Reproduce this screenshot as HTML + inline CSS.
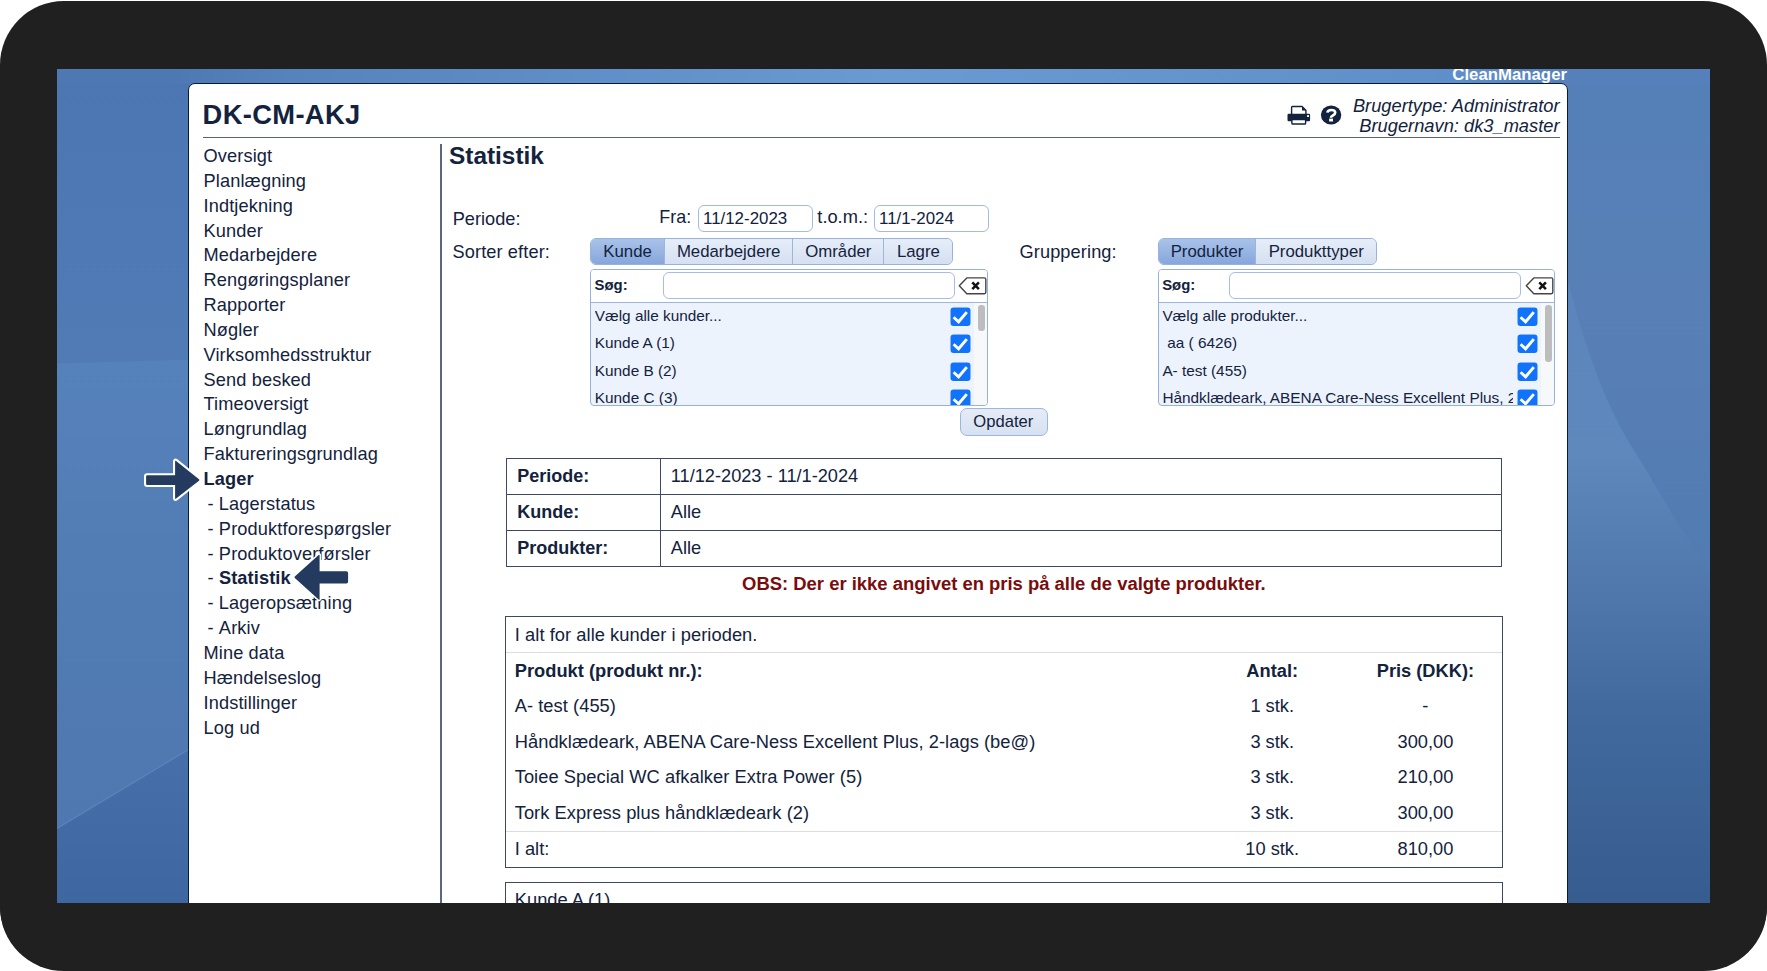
<!DOCTYPE html>
<html><head><meta charset="utf-8"><title>Statistik</title><style>
html,body{margin:0;padding:0;width:1767px;height:971px;overflow:hidden;background:#fff;}
body{position:relative;font-family:"Liberation Sans",sans-serif;color:#13223d;}
.t{position:absolute;line-height:1;white-space:nowrap;}
.r{position:absolute;}
.frame{position:absolute;left:0;top:1px;width:1767px;height:970px;border-radius:64px;background:#212021;}
.blue{position:absolute;left:57px;top:69px;width:1653px;height:834px;overflow:hidden;
 background:linear-gradient(180deg,#4e78b4 0%,#527fbb 35%,#4a74ae 70%,#3e65a0 100%);}
.streak1,.streak2{position:absolute;}
.panel{position:absolute;left:188px;top:83px;width:1378px;height:840px;background:#fff;border:1px solid #0a1a3a;border-radius:7px 7px 0 0;}
.frametop{position:absolute;left:0;top:903px;width:1767px;height:67px;background:#212021;border-radius:0 0 64px 64px;}
.inp{position:absolute;box-sizing:border-box;border:1.3px solid #a3bbe4;border-radius:6px;background:#fff;}
.tabs{position:absolute;display:flex;box-sizing:border-box;border:1.2px solid #97b2df;border-radius:6px;overflow:hidden;background:#dbe5f4;}
.tab{box-sizing:border-box;height:100%;font-size:16.8px;line-height:25px;padding-top:0px;text-align:center;border-left:1px solid #9fb4d8;color:#13223d;
 background:linear-gradient(#e6edf8,#d5e0f1);}
.tab:first-child{border-left:none;}
.tab.sel{background:linear-gradient(#a9c2e8,#86a7dc);}
.lb{position:absolute;box-sizing:border-box;border:1.3px solid #95b1df;border-radius:4px;background:#edf3fd;overflow:hidden;}
.lbhead{position:absolute;left:0;top:0;right:0;height:31.5px;background:#fff;border-bottom:1.3px solid #9db6e0;}
.track{position:absolute;top:32.8px;width:15px;bottom:0;background:#f7f8f9;}
.sinp{position:absolute;box-sizing:border-box;border:1.3px solid #a6bde6;border-radius:6px;background:#fff;}
.clr{position:absolute;line-height:0;}
.cb{position:absolute;line-height:0;}
.sb{position:absolute;width:6.7px;border-radius:3.3px;background:#bdbdbd;}
.btn{position:absolute;box-sizing:border-box;border:1.3px solid #9cb6e2;border-radius:7px;background:linear-gradient(#e6ecf6,#d6e1f1);}
</style></head>
<body>
<div class="frame"></div>
<svg class="r" style="left:57px;top:69px" width="1653" height="834" viewBox="57 69 1653 834">
<defs>
<linearGradient id="gl" x1="0" y1="69" x2="0" y2="903" gradientUnits="userSpaceOnUse">
 <stop offset="0" stop-color="#4c76b2"/><stop offset="0.35" stop-color="#507bb5"/><stop offset="1" stop-color="#3f67a1"/></linearGradient>
<linearGradient id="gl2" x1="0" y1="361" x2="0" y2="830" gradientUnits="userSpaceOnUse">
 <stop offset="0" stop-color="#5682bb"/><stop offset="0.4" stop-color="#527cb4"/><stop offset="1" stop-color="#4f78b1"/></linearGradient>
<linearGradient id="gl3" x1="0" y1="750" x2="0" y2="903" gradientUnits="userSpaceOnUse">
 <stop offset="0" stop-color="#4770ab"/><stop offset="1" stop-color="#3e66a0"/></linearGradient>
<linearGradient id="gr" x1="0" y1="69" x2="0" y2="903" gradientUnits="userSpaceOnUse">
 <stop offset="0" stop-color="#547fb7"/><stop offset="0.28" stop-color="#5880b7"/><stop offset="0.6" stop-color="#527bb2"/><stop offset="1" stop-color="#4a72a8"/></linearGradient>
<linearGradient id="gr2" x1="0" y1="250" x2="0" y2="903" gradientUnits="userSpaceOnUse">
 <stop offset="0" stop-color="#5a84bd"/><stop offset="0.31" stop-color="#5f88bd"/><stop offset="0.7" stop-color="#426a9e"/><stop offset="1" stop-color="#375c8f"/></linearGradient>
<linearGradient id="gt" x1="57" y1="0" x2="1710" y2="0" gradientUnits="userSpaceOnUse">
 <stop offset="0.07" stop-color="#4e78b4"/><stop offset="0.14" stop-color="#5682be"/><stop offset="0.5" stop-color="#6a9ad2"/><stop offset="0.85" stop-color="#5e8fca"/><stop offset="0.91" stop-color="#5580bb"/></linearGradient>
</defs>
<rect x="57" y="69" width="140" height="834" fill="url(#gl)"/>
<path d="M57 363.5L197 359.5V750.2L57 828.4z" fill="url(#gl2)"/>
<path d="M57 828.4L197 744.5V903H57z" fill="url(#gl3)"/>
<path d="M57 828.4L197 744.5" stroke="#6990c6" stroke-opacity="0.55" stroke-width="1.2"/>
<rect x="1560" y="69" width="150" height="834" fill="url(#gr)"/>
<path d="M1560 250C1580 330 1600 400 1640 460C1670 510 1690 545 1710 572V903H1560z" fill="url(#gr2)"/>
<rect x="57" y="69" width="1653" height="15" fill="url(#gt)"/>
</svg>
<div class="r" style="left:57px;top:69px;width:1653px;height:20px;overflow:hidden;"><div class="t" style="right:143px;top:-2.4px;font-size:16.8px;font-weight:bold;color:#fff;">CleanManager</div></div>
<div class="panel"></div>
<div class="t " style="left:202.60px;top:101px;font-size:27.3px;font-weight:bold;letter-spacing:0.37px;">DK-CM-AKJ</div>
<div class="r" style="left:203px;top:136.7px;width:1357px;height:1.2px;background:#566379;"></div>
<div class="t " style="right:207.50px;top:97px;font-size:18.3px;font-style:italic;">Brugertype: Administrator</div>
<div class="t " style="right:207.50px;top:117px;font-size:18.3px;font-style:italic;">Brugernavn: dk3_master</div>
<svg class="r" style="left:1285px;top:103px" width="28" height="24" viewBox="1285 103 28 24">
<path d="M1291.6 114.5V107.3Q1291.6 106.5 1292.4 106.5H1302L1305.9 110.3V114.5" fill="none" stroke="#13223d" stroke-width="1.4"/>
<path d="M1302 106.4V110.4H1306z" fill="#13223d"/>
<rect x="1287.5" y="113.8" width="22.6" height="7.4" rx="1.2" fill="#13223d"/>
<rect x="1307.1" y="115.1" width="1.9" height="1.9" fill="#fff"/>
<path d="M1291.9 119.6H1305.6V123.2Q1305.6 124 1304.8 124H1292.7Q1291.9 124 1291.9 123.2z" fill="#fff" stroke="#13223d" stroke-width="1.4"/>
</svg>
<svg class="r" style="left:1319px;top:103px" width="25" height="25" viewBox="1319 103 25 25">
<ellipse cx="1331.1" cy="115.0" rx="10.2" ry="9.5" fill="#13223d"/>
<path d="M1327.4 112.6C1327.7 110.8 1329.3 110.0 1331.3 110.0C1333.5 110.0 1335.2 111.1 1335.2 112.7C1335.2 114.2 1333.9 114.9 1332.8 115.5C1331.7 116.1 1330.9 116.5 1330.9 117.7" fill="none" stroke="#fff" stroke-width="2.6"/>
<rect x="1329.1" y="118.6" width="3.9" height="2.9" fill="#fff"/>
</svg>
<div class="t " style="left:203.50px;top:147px;font-size:18.2px;letter-spacing:0.13px;">Oversigt</div>
<div class="t " style="left:203.50px;top:172px;font-size:18.2px;letter-spacing:0.13px;">Planlægning</div>
<div class="t " style="left:203.50px;top:197px;font-size:18.2px;letter-spacing:0.13px;">Indtjekning</div>
<div class="t " style="left:203.50px;top:222px;font-size:18.2px;letter-spacing:0.13px;">Kunder</div>
<div class="t " style="left:203.50px;top:246px;font-size:18.2px;letter-spacing:0.13px;">Medarbejdere</div>
<div class="t " style="left:203.50px;top:271px;font-size:18.2px;letter-spacing:0.13px;">Rengøringsplaner</div>
<div class="t " style="left:203.50px;top:296px;font-size:18.2px;letter-spacing:0.13px;">Rapporter</div>
<div class="t " style="left:203.50px;top:321px;font-size:18.2px;letter-spacing:0.13px;">Nøgler</div>
<div class="t " style="left:203.50px;top:346px;font-size:18.2px;letter-spacing:0.13px;">Virksomhedsstruktur</div>
<div class="t " style="left:203.50px;top:371px;font-size:18.2px;letter-spacing:0.13px;">Send besked</div>
<div class="t " style="left:203.50px;top:395px;font-size:18.2px;letter-spacing:0.13px;">Timeoversigt</div>
<div class="t " style="left:203.50px;top:420px;font-size:18.2px;letter-spacing:0.13px;">Løngrundlag</div>
<div class="t " style="left:203.50px;top:445px;font-size:18.2px;letter-spacing:0.13px;">Faktureringsgrundlag</div>
<div class="t " style="left:203.50px;top:470px;font-size:18.2px;letter-spacing:0.13px;"><b>Lager</b></div>
<div class="t " style="left:207.50px;top:495px;font-size:18.2px;letter-spacing:0.13px;">-&nbsp;Lagerstatus</div>
<div class="t " style="left:207.50px;top:520px;font-size:18.2px;letter-spacing:0.13px;">-&nbsp;Produktforespørgsler</div>
<div class="t " style="left:207.50px;top:545px;font-size:18.2px;letter-spacing:0.13px;">-&nbsp;Produktoverførsler</div>
<div class="t " style="left:207.50px;top:569px;font-size:18.2px;letter-spacing:0.13px;">-&nbsp;<b>Statistik</b></div>
<div class="t " style="left:207.50px;top:594px;font-size:18.2px;letter-spacing:0.13px;">-&nbsp;Lageropsætning</div>
<div class="t " style="left:207.50px;top:619px;font-size:18.2px;letter-spacing:0.13px;">-&nbsp;Arkiv</div>
<div class="t " style="left:203.50px;top:644px;font-size:18.2px;letter-spacing:0.13px;">Mine data</div>
<div class="t " style="left:203.50px;top:669px;font-size:18.2px;letter-spacing:0.13px;">Hændelseslog</div>
<div class="t " style="left:203.50px;top:694px;font-size:18.2px;letter-spacing:0.13px;">Indstillinger</div>
<div class="t " style="left:203.50px;top:719px;font-size:18.2px;letter-spacing:0.13px;">Log ud</div>
<div class="r" style="left:440px;top:144px;width:1.6px;height:760px;background:#5a677c;"></div>
<div class="t " style="left:449.00px;top:144px;font-size:24.4px;font-weight:bold;">Statistik</div>
<div class="t " style="left:452.70px;top:210px;font-size:18.2px;">Periode:</div>
<div class="t " style="left:659.30px;top:209px;font-size:17.9px;">Fra:</div>
<div class="inp" style="left:697.6px;top:205px;width:115px;height:27.4px;"></div>
<div class="t " style="left:703.00px;top:211px;font-size:16.9px;">11/12-2023</div>
<div class="t " style="left:817.30px;top:208px;font-size:18.3px;">t.o.m.:</div>
<div class="inp" style="left:873.7px;top:205px;width:115px;height:27.4px;"></div>
<div class="t " style="left:879.00px;top:211px;font-size:16.9px;">11/1-2024</div>
<div class="t " style="left:452.50px;top:243px;font-size:18.2px;letter-spacing:0.11px;">Sorter efter:</div>
<div class="tabs" style="left:590.2px;top:238.2px;height:27px;"><div class="tab sel" style="width:72.8px">Kunde</div><div class="tab" style="width:128.4px">Medarbejdere</div><div class="tab" style="width:90.9px">Områder</div><div class="tab" style="width:69.2px">Lagre</div></div>
<div class="t " style="left:1019.50px;top:243px;font-size:18.2px;letter-spacing:0.11px;">Gruppering:</div>
<div class="tabs" style="left:1157.8px;top:238.2px;height:27px;"><div class="tab sel" style="width:96.5px">Produkter</div><div class="tab" style="width:120.9px">Produkttyper</div></div>
<div class="lb" style="left:590px;top:269px;width:398.3px;height:137px;"><div class="lbhead"></div><div class="track" style="left:383.3px;"></div></div>
<div class="t " style="left:594.60px;top:278px;font-size:14.9px;font-weight:bold;">Søg:</div>
<div class="sinp" style="left:662.50px;top:272.3px;width:292.5px;height:27px;"></div>
<div class="clr" style="left:957.60px;top:276px;"><svg width="30" height="20" viewBox="0 0 30 20"><path d="M8.8 1.9h17.6a1.4 1.4 0 0 1 1.4 1.4v13a1.4 1.4 0 0 1-1.4 1.4H8.8L1.3 9.8z" fill="#fff" stroke="#454545" stroke-width="1.4" stroke-linejoin="round"/><path d="M14.3 6.3l6.6 6.8M20.9 6.3l-6.6 6.8" stroke="#111" stroke-width="2.5"/></svg></div>
<div class="t " style="left:594.80px;top:308px;font-size:15.35px;width:349px;height:20px;overflow:hidden;">Vælg alle kunder...</div>
<div class="cb" style="left:950.10px;top:306.60px;height:20.00px;overflow:hidden;"><svg width="21" height="20" viewBox="0 0 21 20"><rect x="0.5" y="0.5" width="20" height="18.6" rx="3" fill="#fff"/><rect x="0.5" y="0.5" width="20" height="18.6" rx="3" fill="#1172fb"/><path d="M3.6 10.2l5 4.6 8.2-9.7" fill="none" stroke="#fff" stroke-width="2.9" stroke-linejoin="miter"/></svg></div>
<div class="t " style="left:594.80px;top:335px;font-size:15.35px;width:349px;height:20px;overflow:hidden;">Kunde A (1)</div>
<div class="cb" style="left:950.10px;top:334.05px;height:20.00px;overflow:hidden;"><svg width="21" height="20" viewBox="0 0 21 20"><rect x="0.5" y="0.5" width="20" height="18.6" rx="3" fill="#fff"/><rect x="0.5" y="0.5" width="20" height="18.6" rx="3" fill="#1172fb"/><path d="M3.6 10.2l5 4.6 8.2-9.7" fill="none" stroke="#fff" stroke-width="2.9" stroke-linejoin="miter"/></svg></div>
<div class="t " style="left:594.80px;top:363px;font-size:15.35px;width:349px;height:20px;overflow:hidden;">Kunde B (2)</div>
<div class="cb" style="left:950.10px;top:361.50px;height:20.00px;overflow:hidden;"><svg width="21" height="20" viewBox="0 0 21 20"><rect x="0.5" y="0.5" width="20" height="18.6" rx="3" fill="#fff"/><rect x="0.5" y="0.5" width="20" height="18.6" rx="3" fill="#1172fb"/><path d="M3.6 10.2l5 4.6 8.2-9.7" fill="none" stroke="#fff" stroke-width="2.9" stroke-linejoin="miter"/></svg></div>
<div class="t " style="left:594.80px;top:390px;font-size:15.35px;width:349px;height:15px;overflow:hidden;">Kunde C (3)</div>
<div class="cb" style="left:950.10px;top:388.95px;height:16.25px;overflow:hidden;"><svg width="21" height="20" viewBox="0 0 21 20"><rect x="0.5" y="0.5" width="20" height="18.6" rx="3" fill="#fff"/><rect x="0.5" y="0.5" width="20" height="18.6" rx="3" fill="#1172fb"/><path d="M3.6 10.2l5 4.6 8.2-9.7" fill="none" stroke="#fff" stroke-width="2.9" stroke-linejoin="miter"/></svg></div>
<div class="sb" style="left:978.20px;top:305.3px;height:26px;"></div>
<div class="lb" style="left:1157.6px;top:269px;width:397.7px;height:137px;"><div class="lbhead"></div><div class="track" style="left:382.7px;"></div></div>
<div class="t " style="left:1162.20px;top:278px;font-size:14.9px;font-weight:bold;">Søg:</div>
<div class="sinp" style="left:1229.40px;top:272.3px;width:291.5px;height:27px;"></div>
<div class="clr" style="left:1524.60px;top:276px;"><svg width="30" height="20" viewBox="0 0 30 20"><path d="M8.8 1.9h17.6a1.4 1.4 0 0 1 1.4 1.4v13a1.4 1.4 0 0 1-1.4 1.4H8.8L1.3 9.8z" fill="#fff" stroke="#454545" stroke-width="1.4" stroke-linejoin="round"/><path d="M14.3 6.3l6.6 6.8M20.9 6.3l-6.6 6.8" stroke="#111" stroke-width="2.5"/></svg></div>
<div class="t " style="left:1162.40px;top:308px;font-size:15.35px;width:351px;height:20px;overflow:hidden;">Vælg alle produkter...</div>
<div class="cb" style="left:1517.10px;top:306.60px;height:20.00px;overflow:hidden;"><svg width="21" height="20" viewBox="0 0 21 20"><rect x="0.5" y="0.5" width="20" height="18.6" rx="3" fill="#fff"/><rect x="0.5" y="0.5" width="20" height="18.6" rx="3" fill="#1172fb"/><path d="M3.6 10.2l5 4.6 8.2-9.7" fill="none" stroke="#fff" stroke-width="2.9" stroke-linejoin="miter"/></svg></div>
<div class="t " style="left:1167.20px;top:335px;font-size:15.35px;width:351px;height:20px;overflow:hidden;">aa ( 6426)</div>
<div class="cb" style="left:1517.10px;top:334.05px;height:20.00px;overflow:hidden;"><svg width="21" height="20" viewBox="0 0 21 20"><rect x="0.5" y="0.5" width="20" height="18.6" rx="3" fill="#fff"/><rect x="0.5" y="0.5" width="20" height="18.6" rx="3" fill="#1172fb"/><path d="M3.6 10.2l5 4.6 8.2-9.7" fill="none" stroke="#fff" stroke-width="2.9" stroke-linejoin="miter"/></svg></div>
<div class="t " style="left:1162.40px;top:363px;font-size:15.35px;width:351px;height:20px;overflow:hidden;">A- test (455)</div>
<div class="cb" style="left:1517.10px;top:361.50px;height:20.00px;overflow:hidden;"><svg width="21" height="20" viewBox="0 0 21 20"><rect x="0.5" y="0.5" width="20" height="18.6" rx="3" fill="#fff"/><rect x="0.5" y="0.5" width="20" height="18.6" rx="3" fill="#1172fb"/><path d="M3.6 10.2l5 4.6 8.2-9.7" fill="none" stroke="#fff" stroke-width="2.9" stroke-linejoin="miter"/></svg></div>
<div class="t " style="left:1162.40px;top:390px;font-size:15.35px;width:351px;height:15px;overflow:hidden;">Håndklædeark, ABENA Care-Ness Excellent Plus, 2-lags (be@)</div>
<div class="cb" style="left:1517.10px;top:388.95px;height:16.25px;overflow:hidden;"><svg width="21" height="20" viewBox="0 0 21 20"><rect x="0.5" y="0.5" width="20" height="18.6" rx="3" fill="#fff"/><rect x="0.5" y="0.5" width="20" height="18.6" rx="3" fill="#1172fb"/><path d="M3.6 10.2l5 4.6 8.2-9.7" fill="none" stroke="#fff" stroke-width="2.9" stroke-linejoin="miter"/></svg></div>
<div class="sb" style="left:1545.20px;top:305.3px;height:57px;"></div>
<div class="btn" style="left:959.5px;top:407.6px;width:88px;height:28.6px;"></div>
<div class="t " style="left:973.30px;top:414px;font-size:16.6px;">Opdater</div>
<div class="r" style="left:506.15px;top:457.65px;width:995.8px;height:1.3px;background:#3c4961;"></div>
<div class="r" style="left:506.15px;top:493.85px;width:995.8px;height:1.3px;background:#3c4961;"></div>
<div class="r" style="left:506.15px;top:529.95px;width:995.8px;height:1.3px;background:#3c4961;"></div>
<div class="r" style="left:506.15px;top:566.15px;width:995.8px;height:1.3px;background:#3c4961;"></div>
<div class="r" style="left:506.15px;top:457.65px;width:1.3px;height:109.8px;background:#3c4961;"></div>
<div class="r" style="left:659.65px;top:457.65px;width:1.3px;height:109.8px;background:#3c4961;"></div>
<div class="r" style="left:1500.65px;top:457.65px;width:1.3px;height:109.8px;background:#3c4961;"></div>
<div class="t " style="left:517.20px;top:467px;font-size:18.0px;font-weight:bold;">Periode:</div>
<div class="t " style="left:517.20px;top:503px;font-size:18.0px;font-weight:bold;">Kunde:</div>
<div class="t " style="left:517.20px;top:539px;font-size:18.0px;font-weight:bold;">Produkter:</div>
<div class="t " style="left:670.80px;top:467px;font-size:18.2px;">11/12-2023 - 11/1-2024</div>
<div class="t " style="left:670.80px;top:503px;font-size:18.2px;">Alle</div>
<div class="t " style="left:670.80px;top:539px;font-size:18.2px;">Alle</div>
<div class="t " style="left:1003.90px;top:575px;font-size:18.45px;transform:translateX(-50%);font-weight:bold;color:#7a0c0c;">OBS: Der er ikke angivet en pris på alle de valgte produkter.</div>
<div class="r" style="left:505.15px;top:616.15px;width:997.8px;height:1.3px;background:#3c4961;"></div>
<div class="r" style="left:505.15px;top:866.55px;width:997.8px;height:1.3px;background:#3c4961;"></div>
<div class="r" style="left:505.15px;top:616.15px;width:1.3px;height:251.7px;background:#3c4961;"></div>
<div class="r" style="left:1501.65px;top:616.15px;width:1.3px;height:251.7px;background:#3c4961;"></div>
<div class="r" style="left:505.93px;top:652.22px;width:996.25px;height:1.15px;background:#dcdddf;"></div>
<div class="r" style="left:505.93px;top:830.52px;width:996.25px;height:1.15px;background:#dcdddf;"></div>
<div class="t " style="left:514.80px;top:626px;font-size:18.3px;letter-spacing:0.055px;">I alt for alle kunder i perioden.</div>
<div class="t " style="left:514.80px;top:662px;font-size:18.3px;font-weight:bold;">Produkt (produkt nr.):</div>
<div class="t " style="left:1272.20px;top:662px;font-size:18.25px;transform:translateX(-50%);font-weight:bold;">Antal:</div>
<div class="t " style="left:1425.40px;top:662px;font-size:18.25px;transform:translateX(-50%);font-weight:bold;">Pris (DKK):</div>
<div class="t " style="left:514.70px;top:697px;font-size:18.3px;letter-spacing:0.055px;">A- test (455)</div>
<div class="t " style="left:1272.20px;top:697px;font-size:18.25px;transform:translateX(-50%);">1 stk.</div>
<div class="t " style="left:1425.40px;top:697px;font-size:18.25px;transform:translateX(-50%);">-</div>
<div class="t " style="left:514.70px;top:733px;font-size:18.3px;letter-spacing:0.055px;">Håndklædeark, ABENA Care-Ness Excellent Plus, 2-lags (be@)</div>
<div class="t " style="left:1272.20px;top:733px;font-size:18.25px;transform:translateX(-50%);">3 stk.</div>
<div class="t " style="left:1425.40px;top:733px;font-size:18.25px;transform:translateX(-50%);">300,00</div>
<div class="t " style="left:514.70px;top:768px;font-size:18.3px;letter-spacing:0.055px;">Toiee Special WC afkalker Extra Power (5)</div>
<div class="t " style="left:1272.20px;top:768px;font-size:18.25px;transform:translateX(-50%);">3 stk.</div>
<div class="t " style="left:1425.40px;top:768px;font-size:18.25px;transform:translateX(-50%);">210,00</div>
<div class="t " style="left:514.70px;top:804px;font-size:18.3px;letter-spacing:0.055px;">Tork Express plus håndklædeark (2)</div>
<div class="t " style="left:1272.20px;top:804px;font-size:18.25px;transform:translateX(-50%);">3 stk.</div>
<div class="t " style="left:1425.40px;top:804px;font-size:18.25px;transform:translateX(-50%);">300,00</div>
<div class="t " style="left:514.80px;top:840px;font-size:18.3px;">I alt:</div>
<div class="t " style="left:1272.20px;top:840px;font-size:18.25px;transform:translateX(-50%);">10 stk.</div>
<div class="t " style="left:1425.40px;top:840px;font-size:18.25px;transform:translateX(-50%);">810,00</div>
<div class="r" style="left:505.15px;top:881.95px;width:997.8px;height:1.3px;background:#3c4961;"></div>
<div class="r" style="left:505.15px;top:881.95px;width:1.3px;height:38.7px;background:#3c4961;"></div>
<div class="r" style="left:1501.65px;top:881.95px;width:1.3px;height:38.7px;background:#3c4961;"></div>
<div class="t " style="left:514.80px;top:891px;font-size:18.3px;">Kunde A (1)</div>
<svg class="r" style="left:138px;top:452px" width="70" height="56" viewBox="138 452 70 56">
<path d="M147.3 475.3H175.1V461.5Q175.1 460.2 176.1 461.0L199 479.3Q199.8 480 199 480.7L176.1 498.6Q175.1 499.4 175.1 498.1V484.9H147.3Q146.1 484.9 146.1 483.7V476.5Q146.1 475.3 147.3 475.3z" fill="#243a5e" stroke="#fff" stroke-width="4.2" stroke-linejoin="round" paint-order="stroke"/>
</svg>
<svg class="r" style="left:288px;top:548px" width="66" height="58" viewBox="288 548 66 58">
<path d="M294.8 576.5L318.6 555Q319.6 554.1 319.6 555.5V571.3H346.4Q348.1 571.3 348.1 573V581.8Q348.1 583.5 346.4 583.5H319.6V598.9Q319.6 600.3 318.6 599.4L294.8 577.9Q294.2 577.2 294.8 576.5z" fill="#243a5e" stroke="#fff" stroke-width="3" stroke-linejoin="round" paint-order="stroke"/>
</svg>
<div class="frametop"></div>
</body></html>
